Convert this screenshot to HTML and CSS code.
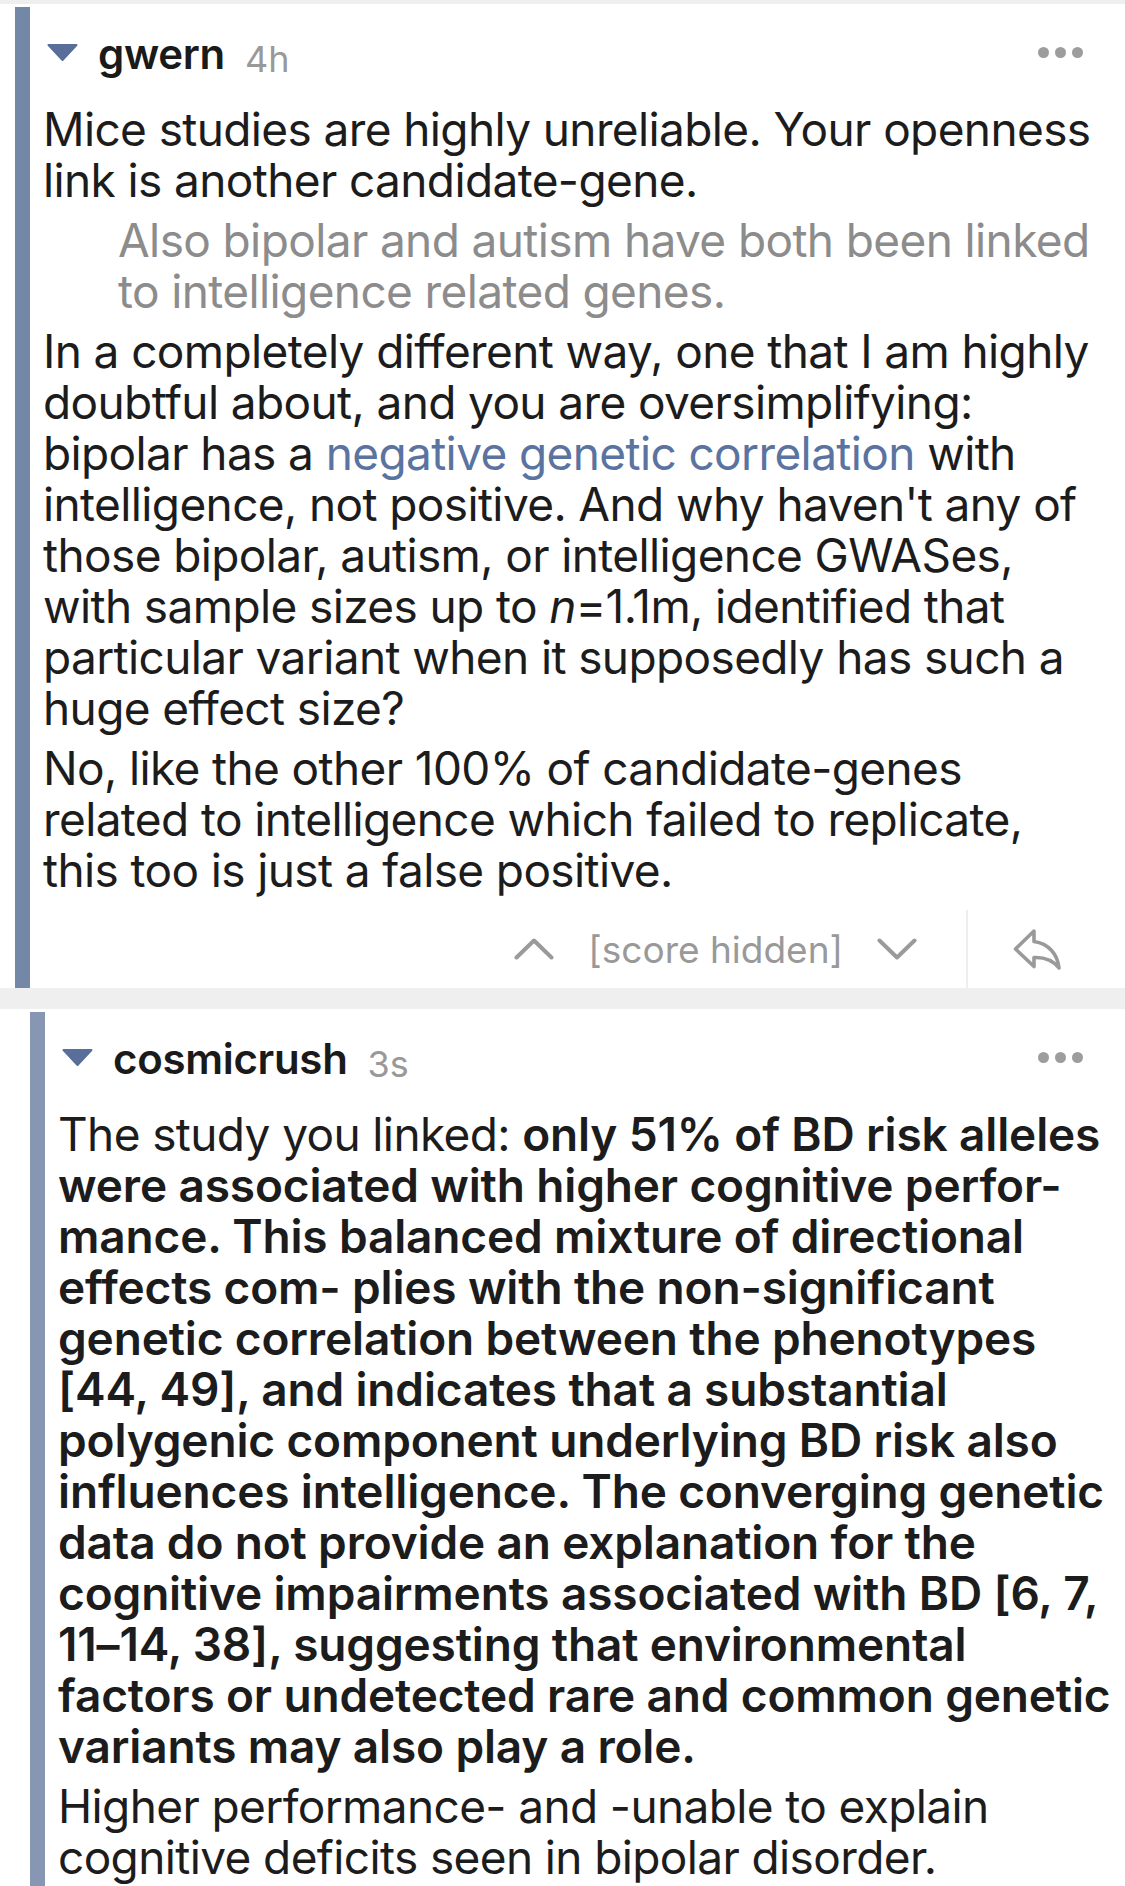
FILE: index.html
```html
<!DOCTYPE html>
<html lang="en">
<head>
<meta charset="utf-8">
<title>Comments</title>
<link rel="stylesheet" href="styles.css">
</head>
<body>
<div class="strip"></div>

<article class="comment depth1">
  <div class="bar"></div>
  <div class="content">
    <header class="head">
      <svg class="caret" width="31" height="17" viewBox="0 0 31 17"><path d="M1.5 1 L29.5 1 L15.5 16 Z" fill="#5a6e9a" stroke="#5a6e9a" stroke-width="2" stroke-linejoin="round"/></svg>
      <div class="who"><span class="name">gwern</span><span class="age">4h</span></div>
      <div class="more"><span></span><span></span><span></span></div>
    </header>
    <div class="body">
      <p>Mice studies are highly unreliable. Your openness<br>link is another candidate-gene.</p>
      <blockquote>Also bipolar and autism have both been linked<br>to intelligence related genes.</blockquote>
      <p>In a completely different way, one that I am highly<br>doubtful about, and you are oversimplifying:<br>bipolar has a <a href="#">negative genetic correlation</a> with<br>intelligence, not positive. And why haven't any of<br>those bipolar, autism, or intelligence GWASes,<br>with sample sizes up to <i>n</i>=1.1m, identified that<br>particular variant when it supposedly has such a<br>huge effect size?</p>
      <p>No, like the other 100% of candidate-genes<br>related to intelligence which failed to replicate,<br>this too is just a false positive.</p>
    </div>
    <footer class="actions">
      <div class="votes">
        <svg class="chev" width="40" height="22" viewBox="0 0 40 22"><polyline points="2.5,19.5 20,2.5 37.5,19.5" fill="none" stroke="#9a9a9a" stroke-width="4" stroke-linecap="round" stroke-linejoin="round"/></svg>
        <span class="score">[score hidden]</span>
        <svg class="chev" width="40" height="22" viewBox="0 0 40 22"><polyline points="2.5,2.5 20,19.5 37.5,2.5" fill="none" stroke="#9a9a9a" stroke-width="4" stroke-linecap="round" stroke-linejoin="round"/></svg>
      </div>
      <div class="reply">
        <svg width="48" height="41" viewBox="0 0 48 41"><path d="M21 2 L2.5 20 L21 37.5 L21 28.5 C32 28 40.5 32 46 39 C44.5 25 35.5 14.5 21 12.5 Z" fill="none" stroke="#9a9a9a" stroke-width="3.6" stroke-linejoin="round" stroke-linecap="round"/></svg>
      </div>
    </footer>
  </div>
</article>

<div class="sep"></div>

<article class="comment depth2">
  <div class="bar"></div>
  <div class="content">
    <header class="head">
      <svg class="caret" width="31" height="17" viewBox="0 0 31 17"><path d="M1.5 1 L29.5 1 L15.5 16 Z" fill="#5a6e9a" stroke="#5a6e9a" stroke-width="2" stroke-linejoin="round"/></svg>
      <div class="who"><span class="name">cosmicrush</span><span class="age">3s</span></div>
      <div class="more"><span></span><span></span><span></span></div>
    </header>
    <div class="body">
      <p>The study you linked: <b>only 51% of BD risk alleles<br>were associated with higher cognitive perfor-<br>mance. This balanced mixture of directional<br>effects com- plies with the non-significant<br>genetic correlation between the phenotypes<br>[44, 49], and indicates that a substantial<br>polygenic component underlying BD risk also<br>influences intelligence. The converging genetic<br>data do not provide an explanation for the<br>cognitive impairments associated with BD [6, 7,<br>11–14, 38], suggesting that environmental<br>factors or undetected rare and common genetic<br>variants may also play a role.</b></p>
      <p>Higher performance- and -unable to explain<br>cognitive deficits seen in bipolar disorder.</p>
    </div>
  </div>
</article>
</body>
</html>
```

FILE: styles.css
```css
html, body {
  margin: 0;
  padding: 0;
  background: #ffffff;
}

body {
  width: 1125px;
  height: 1886px;
  overflow: hidden;
  font-family: Inter, "Noto Sans", sans-serif;
  color: #1c1c1c;
}

.strip {
  height: 4px;
  background: #efefef;
}

.sep {
  height: 21px;
  background: #efefef;
}

.comment {
  display: flex;
  padding-top: 3px;
}

.depth1 .bar {
  margin-left: 15px;
  background: #7387a6;
}

.depth2 {
  min-height: 874px;
}

.depth2 .bar {
  margin-left: 30px;
  background: #8696b3;
}

.bar {
  width: 15px;
  flex: none;
}

.content {
  flex: 1;
  min-width: 0;
  padding-left: 13px;
  padding-right: 12px;
}

.head {
  display: flex;
  align-items: center;
  height: 60px;
  margin-top: 13px;
}

.caret {
  flex: none;
  margin-left: 4px;
  margin-right: 20px;
  margin-top: 5px;
}

.who {
  align-self: flex-start;
  padding-top: 4px;
  line-height: 60px;
  white-space: nowrap;
}

.name {
  font-size: 42px;
  font-weight: 600;
  color: #1a1a1a;
  letter-spacing: -0.3px;
}

.age {
  font-size: 36px;
  color: #999999;
  margin-left: 20px;
  vertical-align: -3px;
}

.more {
  margin-left: auto;
  margin-right: 30px;
  margin-top: 4px;
  display: flex;
  gap: 6px;
}

.more span {
  width: 11px;
  height: 11px;
  border-radius: 50%;
  background: #9d9d9d;
}

.body {
  margin-top: 24px;
  font-size: 46px;
  line-height: 51px;
  letter-spacing: -0.62px;
}

.body p,
.body blockquote {
  margin: 0 0 9px 0;
  white-space: nowrap;
}

.body p:last-child {
  margin-bottom: 0;
}

.body blockquote {
  margin-left: 75px;
  color: #8c8c8c;
}

.body a {
  color: #5a73a0;
  text-decoration: none;
}

.body b {
  font-weight: 600;
  letter-spacing: -0.15px;
}

.actions {
  display: flex;
  justify-content: flex-end;
  margin-top: 14px;
  height: 78px;
}

.votes {
  display: flex;
  align-items: center;
  gap: 34px;
  margin-right: 49px;
}

.score {
  font-size: 37px;
  color: #999999;
  letter-spacing: 0;
}

.reply {
  width: 100px;
  border-left: 2px solid #eeeeee;
  display: flex;
  align-items: center;
  padding-left: 45px;
}
```
